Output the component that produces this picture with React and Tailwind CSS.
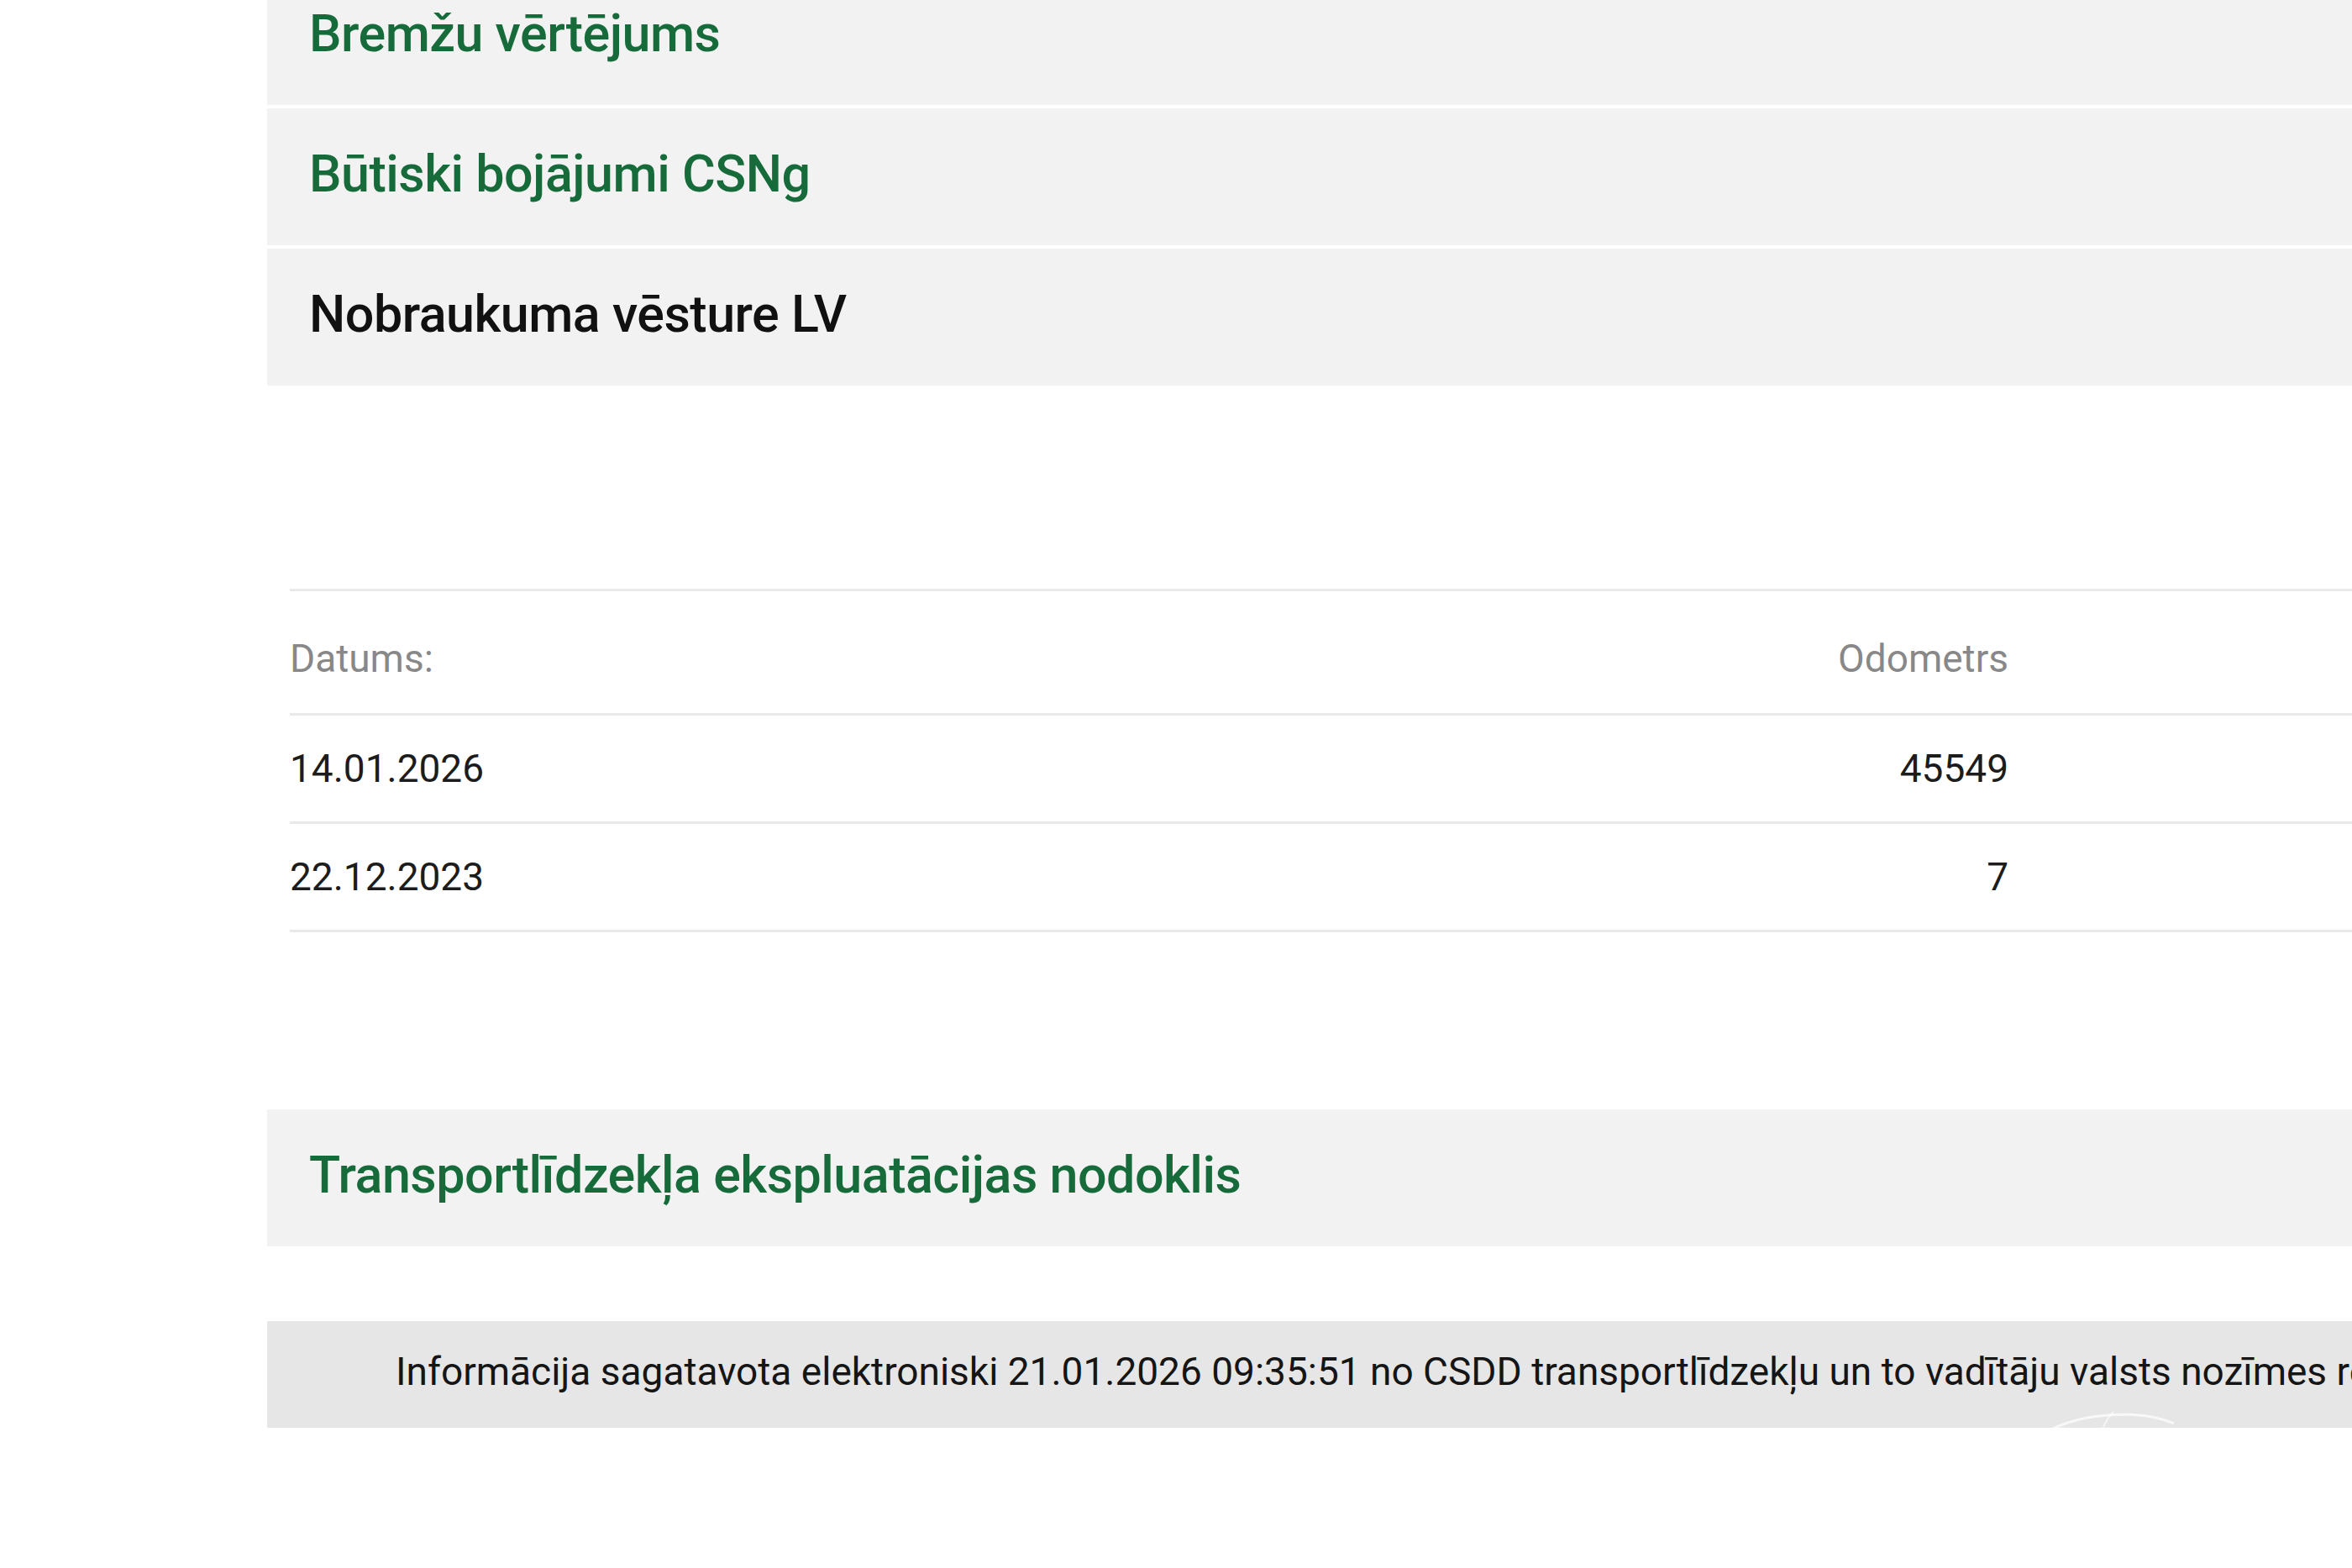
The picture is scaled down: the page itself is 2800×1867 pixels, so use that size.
import React from 'react';

const sections = ['Bremžu vērtējums', 'Būtiski bojājumi CSNg'];

const rows = [
    { date: '14.01.2026', odo: '45549' },
    { date: '22.12.2023', odo: '7' },
];

const Panel = ({ title, active = false, className = '' }) => (
    <div className={`h-[163px] bg-[#f2f2f2] flex items-center pl-[50px] pb-[7px] ${className}`}>
        <h3
            className={`text-[61px] font-medium tracking-[-0.5px] leading-none ${
                active ? 'text-[#111]' : 'text-[#176b3b]'
            }`}
        >
            {title}
        </h3>
    </div>
);

const App = () => {
    return (
        <div className="w-[2800px] h-[1867px] overflow-hidden bg-white font-['Roboto',sans-serif]">
            <div className="pl-[318px] flex flex-col">
                <div className="flex flex-col gap-[4px] -mt-[38px]">
                    {sections.map((s) => (
                        <Panel key={s} title={s} />
                    ))}
                    <Panel title="Nobraukuma vēsture LV" active />
                </div>

                {/* nobraukuma tabula */}
                <div className="ml-[27px] mt-[242px]">
                    <div className="border-t-[3px] border-[#e9e9e9]">
                        <div className="flex h-[145px] items-center pt-[16px] text-[46px] text-[#888]">
                            <span className="flex-none">Datums:</span>
                            <span className="ml-auto mr-[409px]">Odometrs</span>
                        </div>
                        {rows.map((r) => (
                            <div
                                key={r.date}
                                className="flex h-[129px] items-center border-t-[3px] border-[#e9e9e9] text-[46px] text-[#1c1c1c]"
                            >
                                <span>{r.date}</span>
                                <span className="ml-auto mr-[409px]">{r.odo}</span>
                            </div>
                        ))}
                        <div className="border-t-[3px] border-[#e9e9e9]" />
                    </div>
                </div>

                <Panel title="Transportlīdzekļa ekspluatācijas nodoklis" className="mt-[211px] h-[161px]" />

                <div className="relative mt-[89px] h-[127px] bg-[#e6e6e6] flex items-center pl-[153px] pb-[6px] whitespace-nowrap overflow-hidden">
                    <p className="text-[46px] text-[#151515]">
                        Informācija sagatavota elektroniski 21.01.2026 09:35:51 no CSDD transportlīdzekļu un to vadītāju valsts nozīmes reģistra
                    </p>
                    <svg
                        className="absolute left-[2120px] top-[100px]"
                        width="160"
                        height="40"
                        viewBox="0 0 160 40"
                        fill="none"
                    >
                        <path d="M2 30 C40 10, 110 4, 150 22" stroke="#ffffff" strokeOpacity="0.7" strokeWidth="3" />
                        <path d="M78 8 C70 16, 66 24, 64 34" stroke="#ffffff" strokeOpacity="0.6" strokeWidth="2" />
                    </svg>
                </div>
            </div>
        </div>
    );
};

export default App;
